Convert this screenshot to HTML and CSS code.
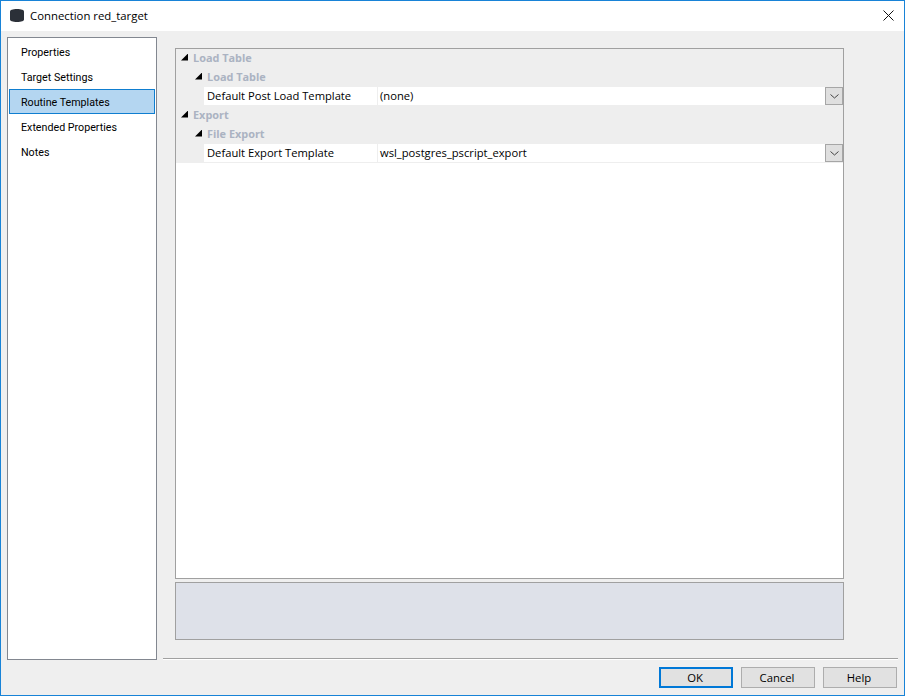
FILE: index.html
```html
<!DOCTYPE html>
<html lang="en">
<head>
<meta charset="utf-8">
<title>Connection red_target</title>
<link rel="stylesheet" href="styles.css">
</head>
<body>
<div class="window">
  <header class="titlebar">
    <svg class="app-icon" width="14" height="13" viewBox="0 0 14 13"><path d="M0 2.5C0 1 2.5 0 7 0s7 1 7 2.5v8C14 12 11.500 13 7 13s-7-1-7-2.500z" fill="#2b3038"/></svg>
    <span class="title">Connection red_target</span>
    <svg class="close" width="11" height="11" viewBox="0 0 11 11"><path d="M.5.5l10 10M10.500.5l-10 10" stroke="#111" stroke-width="1" fill="none"/></svg>
  </header>
  <div class="content">
    <nav class="sidebar">
      <div class="nav-item">Properties</div>
      <div class="nav-item">Target Settings</div>
      <div class="nav-item selected">Routine Templates</div>
      <div class="nav-item">Extended Properties</div>
      <div class="nav-item">Notes</div>
    </nav>
    <main class="main">
      <section class="grid">
        <div class="group level1"><span class="tri"></span>Load Table</div>
        <div class="group level2"><span class="tri"></span>Load Table</div>
        <div class="row">
          <div class="name">Default Post Load Template</div>
          <div class="value">(none)</div>
          <div class="drop"><svg width="9" height="5" viewBox="0 0 9 5"><path d="M.5.500l4 3.500 4-3.500" stroke="#444" fill="none"/></svg></div>
        </div>
        <div class="group level1"><span class="tri"></span>Export</div>
        <div class="group level2"><span class="tri"></span>File Export</div>
        <div class="row">
          <div class="name">Default Export Template</div>
          <div class="value">wsl_postgres_pscript_export</div>
          <div class="drop"><svg width="9" height="5" viewBox="0 0 9 5"><path d="M.5.500l4 3.500 4-3.500" stroke="#444" fill="none"/></svg></div>
        </div>
      </section>
      <section class="description"></section>
      <div class="separator"></div>
      <footer class="buttons">
        <button class="btn default">OK</button>
        <button class="btn">Cancel</button>
        <button class="btn">Help</button>
      </footer>
    </main>
  </div>
</div>
</body>
</html>
```
FILE: styles.css
```css
* { box-sizing: border-box; }
html, body { margin: 0; padding: 0; }
body { width: 905px; height: 696px; overflow: hidden; font-family: "Open Sans", "Noto Sans", sans-serif; font-size: 11.2px; color: #000; }
.window { width: 905px; height: 696px; border: 1px solid #1883d7; background: #efefef; display: flex; flex-direction: column; }
.titlebar { height: 30px; background: #fff; display: flex; align-items: center; padding: 0 10px 1px 9px; flex: none; }
.app-icon { flex: none; }
.title { margin-left: 6px; font-size: 11.35px; flex: 1; }
.close { flex: none; }
.content { flex: 1; display: flex; padding: 6px 6px 0; }
.sidebar { width: 150px; height: 623px; flex: none; background: #fff; border: 1px solid #828790; padding: 1px; display: flex; flex-direction: column; }
.nav-item { height: 25px; line-height: 25px; padding-left: 11px; border: 1px solid transparent; font-family: Roboto, sans-serif; font-size: 10.7px; }
.nav-item.selected { background: #b4d6f1; border-color: #0f7ed0; }
.main { flex: 1; margin-left: 6px; padding-top: 11px; display: flex; flex-direction: column; }
.grid { margin-left: 12px; width: 669px; height: 531px; background: #fff; border: 1px solid #a0a0a0; flex: none; }
.group { height: 19px; background: #eee; color: #abb3c2; font-weight: 700; font-size: 10.9px; display: flex; align-items: center; line-height: 17px; padding-bottom: 3px; }
.level1 { padding-left: 5px; }
.level2 { padding-left: 19px; }
.tri { width: 7px; height: 7px; background: #000; clip-path: polygon(100% 0, 100% 100%, 0 100%); margin-right: 5px; flex: none; }
.row { height: 19px; display: flex; padding-left: 28px; background: #eee; }
.name { width: 173px; background: #fff; padding-left: 3px; line-height: 18px; height: 18px; }
.value { flex: 1; background: #fff; margin-left: 1px; padding-left: 2px; line-height: 18px; height: 18px; }
.drop { width: 18px; height: 18px; background: #dfdfdf; border: 1px solid #a6a6a6; display: flex; align-items: center; justify-content: center; }
.description { margin: 3px 0 0 12px; width: 669px; height: 58px; background: #dee1e9; border: 1px solid #a0a0a0; flex: none; }
.separator { margin-top: 18px; height: 2px; border-top: 1px solid #a0a0a0; border-bottom: 1px solid #fff; flex: none; }
.buttons { margin-top: 7px; padding-right: 1px; display: flex; justify-content: flex-end; gap: 8px; }
.btn { width: 74px; height: 21px; padding: 0 2px 0 0; background: #e1e1e1; border: 1px solid #adadad; font: inherit; font-size: 11.3px; color: #000; }
.btn.default { border: 2px solid #0078d7; }
```
